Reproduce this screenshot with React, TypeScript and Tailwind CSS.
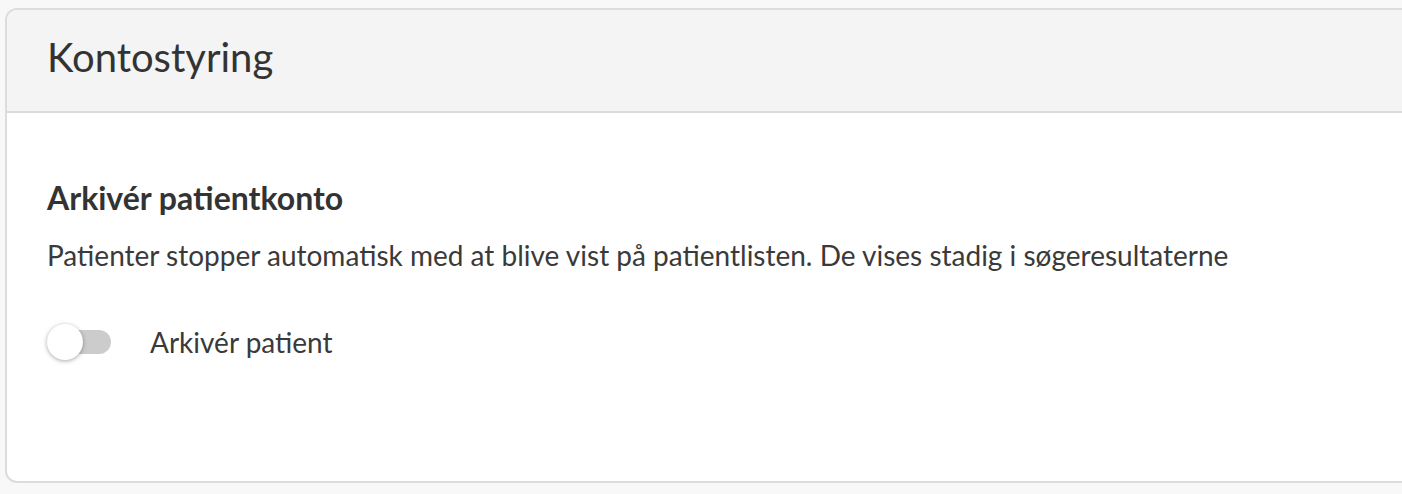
import React from "react";

export default function App() {
  return (
    <div
      className="min-h-[494px] w-[1402px] overflow-hidden bg-[#f8f8f8] pt-[8px] pl-[5px]"
      style={{ fontFamily: "Lato, 'Noto Sans', sans-serif" }}
    >
      <div className="w-[1420px] overflow-hidden rounded-[12px] border-2 border-[#dcdcdc] bg-white text-[#333333]">
        <div className="border-b-2 border-[#dcdcdc] bg-[#f4f4f4] pl-[40px] pt-[23px] pb-[30px]">
          <h1 className="text-[40px] leading-[48px] font-normal">Kontostyring</h1>
        </div>
        <div className="pl-[40px] pt-[66px] pb-[121px]">
          <h2 className="text-[32px] leading-[38px] font-bold">Arkivér patientkonto</h2>
          <p className="mt-[21px] text-[28px] leading-[34px] text-[#3a3a3a]">
            Patienter stopper automatisk med at blive vist på patientlisten. De vises stadig i søgeresultaterne
          </p>
          <div className="mt-[52px] flex items-center">
            <div className="relative flex h-[36px] w-[64px] items-center">
              <div className="ml-[2px] h-[24px] w-[62px] rounded-full bg-[#cccccc]" />
              <div className="absolute left-0 top-0 h-[36px] w-[36px] rounded-full bg-white shadow-[0_1px_4px_rgba(0,0,0,0.35)]" />
            </div>
            <span className="ml-[39px] text-[28px] leading-[34px] text-[#3a3a3a]">Arkivér patient</span>
          </div>
        </div>
      </div>
    </div>
  );
}
